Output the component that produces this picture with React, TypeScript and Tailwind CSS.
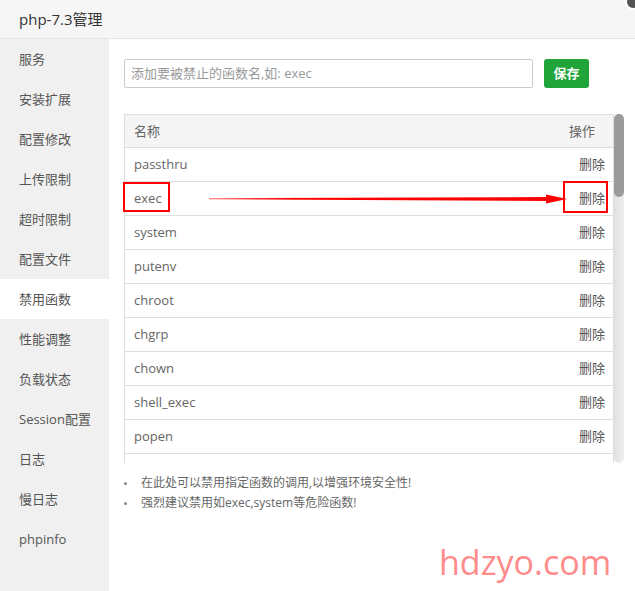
import React from "react";

const menu = [
  "服务",
  "安装扩展",
  "配置修改",
  "上传限制",
  "超时限制",
  "配置文件",
  "禁用函数",
  "性能调整",
  "负载状态",
  "Session配置",
  "日志",
  "慢日志",
  "phpinfo",
];

const funcs = ["passthru", "exec", "system", "putenv", "chroot", "chgrp", "chown", "shell_exec", "popen"];

const font = { fontFamily: '"Open Sans", "Noto Sans CJK SC", sans-serif' };

export default function App() {
  return (
    <div className="relative w-[635px] h-[591px] overflow-hidden bg-white text-[#555]" style={font}>
      {/* title bar */}
      <div className="h-[39px] bg-[#f6f6f6] border-b border-[#e6e6e6] flex items-center pl-[19px] text-[15px] text-[#333]">
        php-7.3管理
      </div>
      <div className="absolute -top-[6px] -right-[6px] w-[16px] h-[16px] rounded-full bg-[#555] border-2 border-white" />

      <div className="flex h-[552px]">
        {/* sidebar */}
        <div className="w-[109px] bg-[#f0f0f0] shrink-0">
          {menu.map((m) => (
            <div
              key={m}
              className={`h-[40px] flex items-center pl-[19px] pt-[1px] text-[13px] text-[#555] ${m === "禁用函数" ? "bg-white" : ""}`}
            >
              {m}
            </div>
          ))}
        </div>

        {/* content */}
        <div className="flex-1 pl-[15px] pt-[20px]">
          <div className="flex items-center gap-[11px]">
            <div className="w-[409px] h-[29px] border border-[#ccc] rounded-[2px] flex items-center pl-[6px] pt-[1px] text-[13px] text-[#999]">
              添加要被禁止的函数名,如: exec
            </div>
            <button className="w-[45px] h-[29px] rounded-[3px] bg-[#20a53a] text-white text-[13px] font-bold">保存</button>
          </div>

          <div className="flex mt-[26px] h-[349px]">
            <div className="w-[490px] h-full overflow-hidden border-l border-r border-[#ddd]">
              <div className="h-[34px] bg-[#f5f5f5] border-t border-b border-[#ddd] flex items-center justify-between pl-[9px] pr-[18px] pt-[1px] text-[13px] text-[#666]">
                <span>名称</span>
                <span>操作</span>
              </div>
              {funcs.map((f) => (
                <div
                  key={f}
                  className="h-[34px] border-b border-[#ddd] flex items-center justify-between pl-[9px] pr-[8px] pt-[1px] text-[13px] text-[#666]"
                >
                  <span>{f}</span>
                  <span className="text-[#555]">删除</span>
                </div>
              ))}
              <div className="h-[34px]" />
            </div>
            <div className="w-[10px] h-full rounded-full bg-gradient-to-r from-[#e2e2e2] to-[#ededed] relative">
              <div className="absolute top-0 left-0 w-[10px] h-[83px] rounded-full bg-[#9b9b9b]" />
            </div>
          </div>

          <ul className="mt-[10px] text-[12px] text-[#666]">
            <li className="h-[20px] flex items-center">
              <span className="w-[3px] h-[3px] rounded-full bg-[#888] mr-[14px]" />
              在此处可以禁用指定函数的调用,以增强环境安全性!
            </li>
            <li className="h-[20px] flex items-center">
              <span className="w-[3px] h-[3px] rounded-full bg-[#888] mr-[14px]" />
              强烈建议禁用如exec,system等危险函数!
            </li>
          </ul>
        </div>
      </div>

      {/* annotations */}
      <div className="absolute left-[123px] top-[182px] w-[47px] h-[30px] border-2 border-[#f00]" />
      <div className="absolute left-[563px] top-[181px] w-[45px] h-[32px] border-2 border-[#f00]" />
      <svg className="absolute left-[205px] top-[190px]" width="366" height="20" viewBox="0 0 366 20">
        <defs>
          <linearGradient id="arr" x1="0" x2="1" y1="0" y2="0">
            <stop offset="0" stopColor="#ff6a6a" />
            <stop offset="0.25" stopColor="#f00" />
            <stop offset="1" stopColor="#f00" />
          </linearGradient>
        </defs>
        <polygon points="4,8.2 343,7 343,11 4,9.2" fill="url(#arr)" />
        <polygon points="341,4.5 362,9 341,13.5" fill="#f00" />
      </svg>

      <div className="absolute left-[439px] top-[545px] text-[34px] leading-none text-[#ff8b8b]" style={font}>
        hdzyo.com
      </div>
    </div>
  );
}
